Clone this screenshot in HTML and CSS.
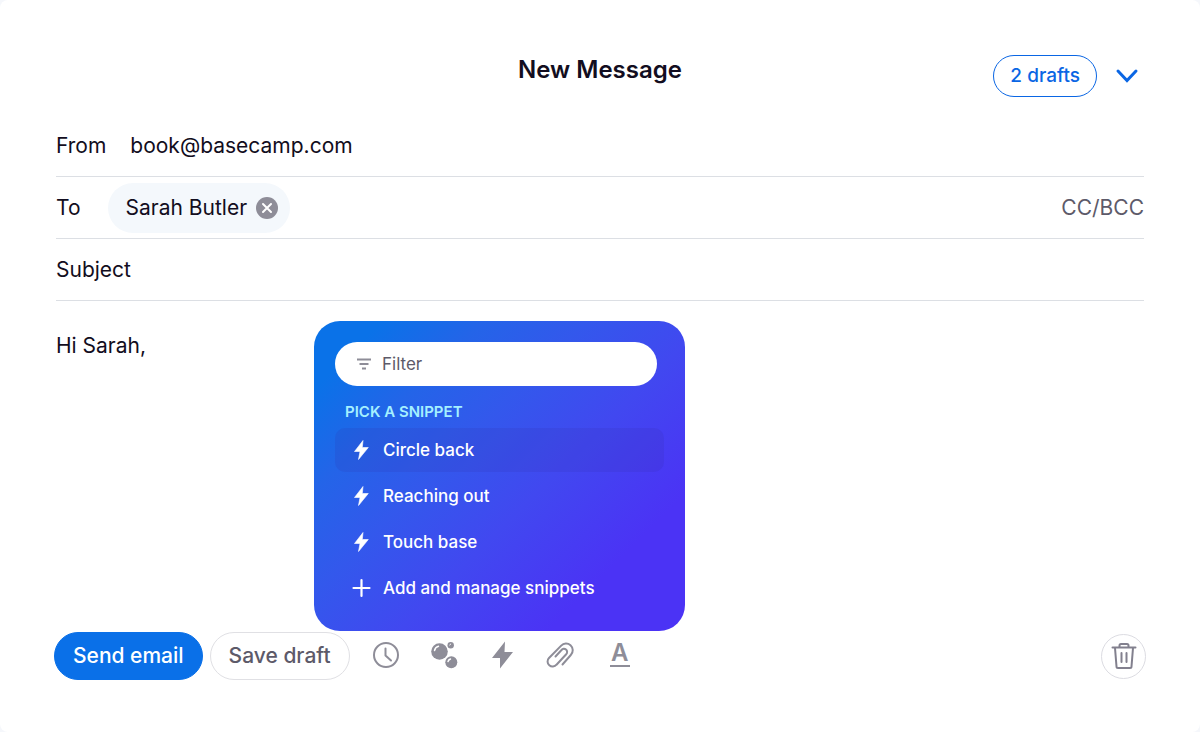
FILE: index.html
```html
<!DOCTYPE html>
<html lang="en">
<head>
  <meta charset="UTF-8">
  <meta name="viewport" content="width=device-width, initial-scale=1">
  <title>New Message</title>
  <link rel="stylesheet" href="styles.css">
</head>
<body>
<form class="composer">
  <header class="header">
    <h1 class="title">New Message</h1>
    <div class="header-actions">
      <button type="button" class="drafts">2 drafts</button>
      <button type="button" class="collapse" aria-label="Minimize">
        <svg width="24" height="16" viewBox="0 0 24 16"><path d="M3 3l9 9.500L21 3" fill="none" stroke="currentColor" stroke-width="3" stroke-linecap="round" stroke-linejoin="miter"/></svg>
      </button>
    </div>
  </header>

  <div class="field">
    <label for="from">From</label>
    <input class="from-input" type="email" id="from" value="book@basecamp.com">
  </div>

  <div class="field">
    <label for="to">To</label>
    <span class="recipient">
      Sarah Butler
      <button type="button" class="remove" aria-label="Remove Sarah Butler">
        <svg width="22" height="22" viewBox="0 0 22 22"><circle cx="11" cy="11" r="11" fill="#8e8d98"/><path d="M7 7l8 8M15 7l-8 8" stroke="#fff" stroke-width="2" stroke-linecap="round"/></svg>
      </button>
    </span>
    <input class="to-input" type="text" id="to">
    <button type="button" class="cc">CC/BCC</button>
  </div>

  <div class="field">
    <label for="subject">Subject</label>
    <input class="subject-input" type="text" id="subject">
  </div>

  <div class="editor">
    <textarea class="message" aria-label="Message">Hi Sarah,</textarea>

    <div class="snippets">
      <div class="filter">
        <svg width="14" height="12" viewBox="0 0 14 12"><path d="M0 1.500h14M2.500 6h9M5 10.500h4" stroke="#8e8d98" stroke-width="2"/></svg>
        <input type="text" placeholder="Filter" aria-label="Filter">
      </div>
      <h2 class="snippets-title">Pick a snippet</h2>
      <div class="snippet-list">
        <button type="button" class="snippet selected">
          <svg width="20" height="20" viewBox="0 0 20 20"><path d="M12 0.500L3.500 11.500h5.500L7.500 19.500l9.800-12h-6z" fill="currentColor" stroke="currentColor" stroke-width="0.600" stroke-linejoin="round"/></svg>
          Circle back
        </button>
        <button type="button" class="snippet">
          <svg width="20" height="20" viewBox="0 0 20 20"><path d="M12 0.500L3.500 11.500h5.500L7.500 19.500l9.800-12h-6z" fill="currentColor" stroke="currentColor" stroke-width="0.600" stroke-linejoin="round"/></svg>
          Reaching out
        </button>
        <button type="button" class="snippet">
          <svg width="20" height="20" viewBox="0 0 20 20"><path d="M12 0.500L3.500 11.500h5.500L7.500 19.500l9.800-12h-6z" fill="currentColor" stroke="currentColor" stroke-width="0.600" stroke-linejoin="round"/></svg>
          Touch base
        </button>
        <button type="button" class="snippet">
          <svg width="20" height="20" viewBox="0 0 20 20"><path d="M10.500 2v16M2.500 10h16" stroke="currentColor" stroke-width="2.200" stroke-linecap="round"/></svg>
          Add and manage snippets
        </button>
      </div>
    </div>
  </div>

  <footer class="toolbar">
    <button type="submit" class="send">Send email</button>
    <button type="button" class="save">Save draft</button>
    <div class="tools">
      <button type="button" class="tool" aria-label="Send later">
        <svg width="28" height="28" viewBox="0 0 28 28" fill="none" stroke="currentColor" stroke-width="2"><circle cx="14" cy="14" r="12"/><path d="M13.500 7.500v7l5.500 5" stroke-linecap="round" stroke-linejoin="round"/></svg>
      </button>
      <button type="button" class="tool" aria-label="Bubble up">
        <svg width="28" height="28" viewBox="0 0 28 28"><g fill="currentColor"><circle cx="9.500" cy="10.500" r="8.300"/><circle cx="20.700" cy="4.300" r="3.200"/><circle cx="21.300" cy="21.300" r="6"/></g><g fill="none" stroke="#fff" stroke-width="1.500" stroke-linecap="round"><path d="M4.500 9.500a5.500 5.500 0 0 1 4-4.300"/><path d="M18 20.500a4 4 0 0 1 2.500-2.500"/><path d="M19.700 4a1.500 1.500 0 0 1 1-1" stroke-width="1"/></g></svg>
      </button>
      <button type="button" class="tool" aria-label="Snippets">
        <svg width="28" height="28" viewBox="0 0 28 28"><path d="M17 0.500L4 17h8L12 27.500 25 11h-8.500z" fill="currentColor"/></svg>
      </button>
      <button type="button" class="tool" aria-label="Attach a file">
        <svg width="28" height="28" viewBox="0 0 28 28" fill="none" stroke="currentColor" stroke-width="2" stroke-linecap="round" stroke-linejoin="round"><path d="M16.500 23.500l8.300-9.500a6.800 6.800 0 0 0-.3-9.800 6.800 6.800 0 0 0-9.300.4L3 17a5 5 0 0 0 .3 7.300 5 5 0 0 0 7.200-.6l9.700-10.400a3.200 3.200 0 0 0-.2-4.700 3.200 3.200 0 0 0-4.500.4L9.500 15.500"/></svg>
      </button>
      <button type="button" class="tool format" aria-label="Format text">A</button>
    </div>
    <button type="button" class="trash" aria-label="Delete draft">
      <svg width="26" height="28" viewBox="0 0 26 28" fill="none" stroke="currentColor" stroke-width="2" stroke-linecap="round" stroke-linejoin="round"><path d="M1.500 5.500h23M8.500 5V3.500a1.500 1.500 0 0 1 1.500-1.500h6a1.500 1.500 0 0 1 1.500 1.500V5M4 6l1.500 18.500a1.500 1.500 0 0 0 1.500 1.500h12a1.500 1.500 0 0 0 1.500-1.500L22 6"/><path d="M10.500 11v9M15.500 11v9"/></svg>
    </button>
  </footer>
</form>
</body>
</html>
```
FILE: styles.css
```css
* {
  box-sizing: border-box;
}
body {
  margin: 0;
  background: #f5f7fb;
  font-family: Inter, "Liberation Sans", sans-serif;
  font-size: 21px;
  line-height: 30px;
  color: #120d20;
}
button, input, textarea {
  margin: 0;
  padding: 0;
  border: none;
  background: none;
  font: inherit;
  color: inherit;
  outline: none;
}
button {
  cursor: pointer;
}
svg {
  display: block;
  flex: none;
}
.composer {
  display: flex;
  flex-direction: column;
  min-height: 100vh;
  padding: 55px 54px 52px;
  border-radius: 8px;
  background: #fff;
}

/* header */
.header {
  display: grid;
  grid-template-columns: 1fr auto 1fr;
  align-items: start;
  height: 60px;
}
.title {
  grid-column: 2;
  margin: 0;
  font-size: 24px;
  font-weight: 600;
}
.header-actions {
  display: flex;
  justify-content: flex-end;
  align-items: center;
  gap: 18px;
  padding-right: 7px;
}
.drafts {
  height: 42px;
  padding: 0 16px;
  border: 1px solid #0a66e4;
  border-radius: 21px;
  font-size: 19px;
  font-weight: 500;
  color: #0a66e4;
}
.collapse {
  color: #0a66e4;
}

/* address fields */
.field {
  display: flex;
  align-items: center;
  height: 62px;
  margin: 0 2px;
  border-bottom: 1px solid #dcdfe4;
}
.from-input {
  flex: 1;
  min-width: 0;
  margin-left: 24px;
}
.to-input, .subject-input {
  flex: 1;
  min-width: 0;
  margin-left: 12px;
}
.recipient {
  display: flex;
  align-items: center;
  gap: 9px;
  height: 50px;
  margin-left: 27px;
  padding: 0 12px 0 18px;
  border-radius: 25px;
  background: #f4f8fc;
}
.cc {
  color: #5d5a69;
}

/* message body */
.editor {
  position: relative;
  display: flex;
  flex: 1;
  margin: 0 2px;
  padding-top: 30px;
}
.message {
  flex: 1;
  resize: none;
}

/* snippet menu */
.snippets {
  position: absolute;
  top: 20px;
  left: 258px;
  width: 371px;
  padding: 21px 21px 21px;
  border-radius: 26px;
  background: linear-gradient(135deg, #0a72e8 10%, #2464e8 25%, #3358ec 40%, #4148f0 58%, #4b33f5 80%);
  color: #fff;
}
.filter {
  display: flex;
  align-items: center;
  gap: 11px;
  height: 44px;
  margin-right: 7px;
  padding: 0 22px;
  border-radius: 22px;
  background: #fff;
  font-size: 17px;
}
.filter input {
  flex: 1;
  min-width: 0;
  color: #120d20;
}
.filter input::placeholder {
  color: #5d5a69;
  opacity: 1;
}
.snippets-title {
  margin: 16px 0 6px 10px;
  font-size: 15px;
  font-weight: 600;
  line-height: 20px;
  text-transform: uppercase;
  color: #a5f0ff;
}
.snippet-list {
  display: flex;
  flex-direction: column;
  gap: 2px;
}
.snippet {
  display: flex;
  align-items: center;
  gap: 12px;
  height: 44px;
  padding: 0 16px;
  border-radius: 10px;
  font-size: 17px;
  font-weight: 500;
}
.snippet.selected {
  background: rgba(50, 40, 160, 0.14);
}

/* bottom toolbar */
.toolbar {
  display: flex;
  align-items: center;
}
.send, .save {
  height: 48px;
  padding: 0 18px;
  border: 1px solid #0a70e8;
  border-radius: 24px;
  font-weight: 500;
}
.send {
  background: #0a70e8;
  color: #fff;
}
.save {
  margin-left: 7px;
  border-color: #e0e0e4;
  color: #5d5a69;
}
.tools {
  display: flex;
  gap: 30px;
  margin-left: 22px;
  color: #8e8d98;
}
.tool {
  display: flex;
  justify-content: center;
  width: 28px;
  height: 30px;
}
.format {
  width: 20px;
  height: 26px;
  margin-left: 6px;
  border-bottom: 2px solid #8e8d98;
  font-size: 24px;
  font-weight: 600;
  line-height: 24px;
}
.trash {
  display: flex;
  justify-content: center;
  align-items: center;
  width: 45px;
  height: 45px;
  margin-left: auto;
  border: 1px solid #dcdce2;
  border-radius: 50%;
  color: #82808e;
}
```
